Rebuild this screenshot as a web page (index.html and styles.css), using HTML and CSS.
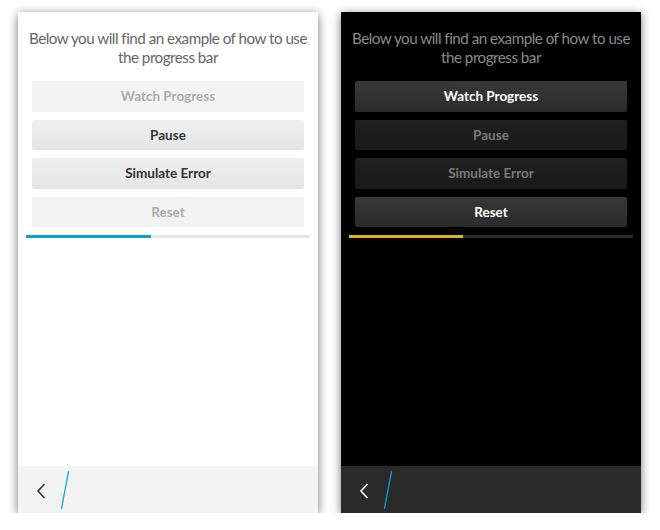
FILE: index.html
```html
<!DOCTYPE html>
<html>
<head>
<meta charset="utf-8">
<link rel="stylesheet" href="styles.css">
</head>
<body>
<div class="stage">
  <div class="phone light">
    <div class="content">
      <p class="intro">Below you will find an example of how to use the progress bar</p>
      <div class="buttons">
        <div class="btn disabled">Watch Progress</div>
        <div class="btn">Pause</div>
        <div class="btn">Simulate Error</div>
        <div class="btn disabled">Reset</div>
      </div>
      <div class="progress"><div class="fill" style="width:44%"></div></div>
    </div>
    <div class="actionbar">
      <svg class="back" width="10" height="16" viewBox="0 0 10 16"><path d="M8.5 1 L2 8 L8.5 15" fill="none" stroke-width="1.6"/></svg>
      <svg class="slash" width="10" height="40" viewBox="0 0 10 40"><line x1="8.6" y1="1" x2="1.4" y2="39" stroke-width="1.3"/></svg>
    </div>
  </div>
  <div class="phone dark">
    <div class="content">
      <p class="intro">Below you will find an example of how to use the progress bar</p>
      <div class="buttons">
        <div class="btn">Watch Progress</div>
        <div class="btn disabled">Pause</div>
        <div class="btn disabled">Simulate Error</div>
        <div class="btn">Reset</div>
      </div>
      <div class="progress"><div class="fill" style="width:40%"></div></div>
    </div>
    <div class="actionbar">
      <svg class="back" width="10" height="16" viewBox="0 0 10 16"><path d="M8.5 1 L2 8 L8.5 15" fill="none" stroke-width="1.6"/></svg>
      <svg class="slash" width="10" height="40" viewBox="0 0 10 40"><line x1="8.6" y1="1" x2="1.4" y2="39" stroke-width="1.3"/></svg>
    </div>
  </div>
</div>
</body>
</html>
```

FILE: styles.css
```css
html, body {
  margin: 0;
  padding: 0;
  background: #ffffff;
}
body {
  font-family: Lato, "Liberation Sans", sans-serif;
}
.stage {
  display: flex;
  gap: 23px;
  padding: 12px 0 0 18px;
}
.phone {
  width: 300px;
  height: 501px;
  display: flex;
  flex-direction: column;
  box-shadow: 0 2px 9px rgba(0, 0, 0, 0.55);
}
.content {
  flex: 1;
  display: flex;
  flex-direction: column;
  padding-top: 17px;
}
.intro {
  margin: 0 4px;
  text-align: center;
  font-size: 15.2px;
  line-height: 19px;
  letter-spacing: -0.5px;
}
.buttons {
  display: flex;
  flex-direction: column;
  gap: 8px;
  margin: 14px 14px 0;
}
.btn {
  height: 30.6px;
  display: flex;
  align-items: center;
  justify-content: center;
  font-size: 13.5px;
  font-weight: 700;
  border-radius: 2px;
}
.progress {
  height: 3px;
  margin: 8px 8px 0;
}
.fill {
  height: 100%;
}
.actionbar {
  height: 47px;
  display: flex;
  align-items: center;
  padding-left: 18px;
  gap: 14px;
}
.back { margin-top: 2px; }

/* light theme */
.light { background: #ffffff; }
.light .intro { color: #666666; }
.light .btn {
  background: linear-gradient(#f0f0f0, #e4e4e4);
  color: #333333;
}
.light .btn.disabled {
  background: #f3f3f3;
  color: #ababab;
}
.light .progress { background: #e6e6e6; }
.light .fill { background: #0f9fd6; }
.light .actionbar { background: #f3f3f3; }
.light .back path { stroke: #333333; }
.light .slash line { stroke: #14a6e0; }

/* dark theme */
.dark { background: #000000; }
.dark .intro { color: #8a8a8a; }
.dark .btn {
  background: linear-gradient(#383838, #2b2b2b);
  color: #ffffff;
}
.dark .btn.disabled {
  background: linear-gradient(#1f1f1f, #1a1a1a);
  color: #7a7a7a;
}
.dark .progress { background: #2b2b2b; }
.dark .fill { background: #e0b320; }
.dark .actionbar { background: #2a2a2a; }
.dark .back path { stroke: #ffffff; }
.dark .slash line { stroke: #0f9fd6; }
```
